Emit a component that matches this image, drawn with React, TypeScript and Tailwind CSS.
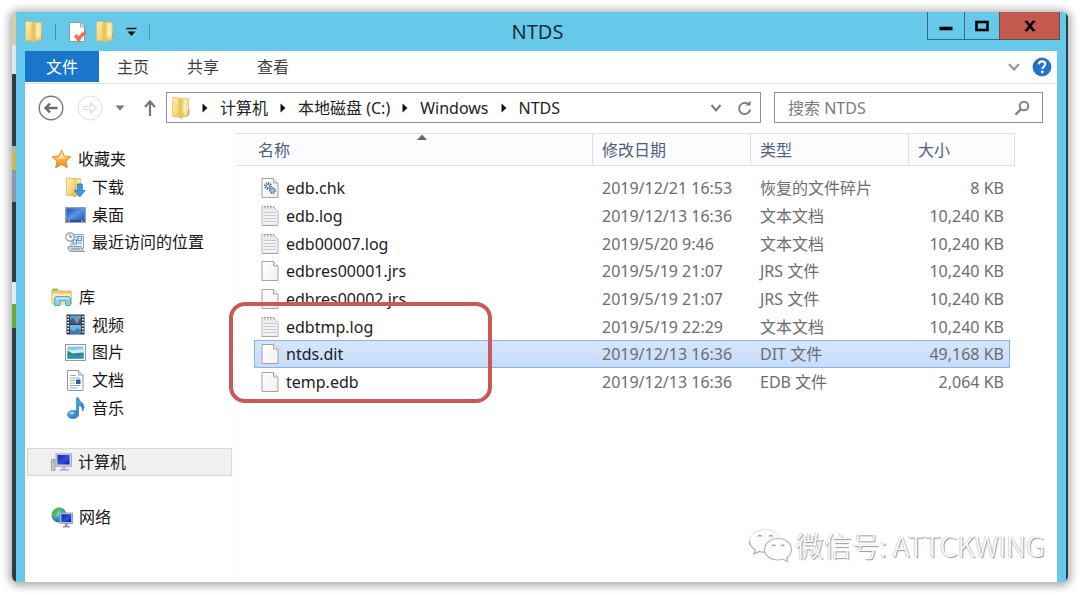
import type { ReactNode } from "react";

type IconProps = { className?: string };

function Gradients() {
  return (
    <svg width="0" height="0" className="absolute" aria-hidden="true">
      <defs>
        <linearGradient id="folderFront" x1="0" y1="0" x2="1" y2="1">
          <stop offset="0" stopColor="#fff0b0" />
          <stop offset="0.6" stopColor="#f3d678" />
          <stop offset="1" stopColor="#dcae3e" />
        </linearGradient>
        <linearGradient id="folderBack" x1="0" y1="0" x2="0" y2="1">
          <stop offset="0" stopColor="#f3dc8e" />
          <stop offset="0.6" stopColor="#f8e6a2" />
          <stop offset="1" stopColor="#e3bf5c" />
        </linearGradient>
        <linearGradient id="screen" x1="0" y1="0" x2="1" y2="1">
          <stop offset="0" stopColor="#1024a0" />
          <stop offset="0.55" stopColor="#2c4fdc" />
          <stop offset="1" stopColor="#10209a" />
        </linearGradient>
        <linearGradient id="desktop" x1="0" y1="0" x2="1" y2="1">
          <stop offset="0" stopColor="#1d4fb4" />
          <stop offset="0.5" stopColor="#5b93e6" />
          <stop offset="1" stopColor="#1f56b8" />
        </linearGradient>
        <linearGradient id="star" x1="0" y1="0" x2="0" y2="1">
          <stop offset="0" stopColor="#ffd873" />
          <stop offset="1" stopColor="#f08a1d" />
        </linearGradient>
        <linearGradient id="blueNote" x1="0" y1="0" x2="1" y2="1">
          <stop offset="0" stopColor="#6fc4f5" />
          <stop offset="1" stopColor="#1568c0" />
        </linearGradient>
        <linearGradient id="paper" x1="0" y1="0" x2="1" y2="1">
          <stop offset="0" stopColor="#ffffff" />
          <stop offset="1" stopColor="#f0f0f0" />
        </linearGradient>
        <radialGradient id="globe" cx="0.35" cy="0.3" r="0.8">
          <stop offset="0" stopColor="#b5f0e8" />
          <stop offset="0.5" stopColor="#2f9ad0" />
          <stop offset="1" stopColor="#125a9a" />
        </radialGradient>
      </defs>
    </svg>
  );
}

function FolderIcon({ className = "h-[22px] w-[18px]" }: IconProps) {
  return (
    <svg viewBox="0 0 18 22" className={className} aria-hidden="true">
      <path d="M8 2.500c0-.8.400-1.300 1.200-1.300h6c.8 0 1.300.5 1.300 1.300V19L8 20.500z" fill="url(#folderBack)" stroke="#dcb856" strokeWidth="0.600" />
      <path d="M13 2.500V18" stroke="#fff3c4" strokeWidth="1.200" />
      <path d="M0.500 1.500c0-.6.400-1 1-1h5l3.500 2V21.500l-4-1.700H1.500c-.6 0-1-.4-1-1z" fill="url(#folderFront)" stroke="#dbb650" strokeWidth="0.600" />
      <path d="M6.500 1.500L10 3v18l-3.500-1.500z" fill="#e8c45c" />
      <path d="M16.200 11.500l1.300 1V17l-1.300 1z" fill="#b9a56a" />
    </svg>
  );
}

function PropertiesIcon() {
  return (
    <svg viewBox="0 0 20 22" className="h-[22px] w-5" aria-hidden="true">
      <path d="M1.500 1.500h11l4 4.500v14.500h-15z" fill="#fff" stroke="#8d9aa5" />
      <path d="M12.500 1.500V6h4" fill="#e3e9ee" stroke="#8d9aa5" strokeWidth="0.8" />
      <path d="M7.500 14l3 4.500c1.500-3 3.500-5 7.500-7.500" fill="none" stroke="#ea7350" strokeWidth="3.600" />
    </svg>
  );
}

function StarIcon() {
  return (
    <svg viewBox="0 0 21 20" className="h-5 w-[21px]" aria-hidden="true">
      <path
        d="M10.500 1l2.800 6 6.600.8-4.900 4.500 1.400 6.500-5.900-3.300-5.900 3.300L6 12.300 1.100 7.800l6.600-.8z"
        fill="url(#star)"
        stroke="#e0882a"
        strokeWidth="0.9"
      />
      <path d="M10.500 3.500l1.900 4.300 4 .5-5 1.200-6 1 2.200-2 .8-.7z" fill="#fff0b8" opacity="0.75" />
    </svg>
  );
}

function DownloadsIcon() {
  return (
    <svg viewBox="0 0 21 21" className="h-[21px] w-[21px]" aria-hidden="true">
      <path d="M7 1.500h8.500v17H7z" fill="url(#folderBack)" stroke="#d9b95c" strokeWidth="0.7" />
      <path d="M1.500 1h5l4 2v17l-4-1.500h-5z" fill="url(#folderFront)" stroke="#d9b450" strokeWidth="0.7" />
      <path d="M12.300 7h5v6.500h2.900L14.800 20l-5.400-6.500h2.900z" fill="#3e9be0" stroke="#2377bd" strokeWidth="0.8" />
    </svg>
  );
}

function DesktopIcon() {
  return (
    <svg viewBox="0 0 21 18" className="h-[18px] w-[21px]" aria-hidden="true">
      <rect x="0.500" y="1.500" width="20" height="15" fill="#7d9cc0" stroke="#8ea5c0" />
      <rect x="1.500" y="2.500" width="18" height="12" fill="url(#desktop)" />
      <path d="M1.500 15h18" stroke="#23395a" strokeWidth="1.500" />
      <path d="M3 15h2M16 15h2" stroke="#c7d9ee" />
    </svg>
  );
}

function RecentIcon() {
  return (
    <svg viewBox="0 0 21 21" className="h-[21px] w-[21px]" aria-hidden="true">
      <path d="M6 2.500h12.500v14H6z" fill="#eaf3fa" stroke="#9ba7b3" />
      <path d="M9 5h3M13 4.500h3.500v4H13zM8 8h3.500v4H8zM13 11h4" stroke="#4b93cf" fill="none" strokeWidth="1.200" />
      <path d="M3 14.500h13c0 2 1 4 3.500 5h-14C3.500 19 3 17 3 14.500z" fill="#cfd5da" stroke="#8f979f" />
      <path d="M6 17h9" stroke="#7d858c" />
      <circle cx="5" cy="5" r="4.200" fill="#f6f7f8" stroke="#9a9fa5" strokeWidth="1.200" />
      <path d="M5 2.500V5h2.200" fill="none" stroke="#666" />
    </svg>
  );
}

function LibraryIcon() {
  return (
    <svg viewBox="0 0 22 20" className="h-5 w-[22px]" aria-hidden="true">
      <path d="M1 2.500h6l1.500 1.500H20v12.500H1z" fill="#e9cc72" stroke="#cbb05c" strokeWidth="0.8" />
      <path d="M2 2.500h4.500" stroke="#69b65b" strokeWidth="1.600" />
      <path d="M1 6h19.500v11H1z" fill="#faeba9" stroke="#d8c06a" strokeWidth="0.8" />
      <path d="M3.500 18.500V12c0-1.500 1-2.500 2.500-2.500h11c1.500 0 2.500 1 2.500 2.500v6.500h-4.800V14H9v4.500z" fill="#8ad0ea" stroke="#4b9fc8" strokeWidth="0.9" />
      <path d="M5.500 12.500c0-.8.500-1.300 1.300-1.300h9.500c.8 0 1.200.5 1.200 1.300" fill="none" stroke="#d5f2fb" strokeWidth="1.300" />
    </svg>
  );
}

function VideoIcon() {
  return (
    <svg viewBox="0 0 19 21" className="h-[21px] w-[21px]" aria-hidden="true">
      <rect x="0.500" y="0.500" width="18" height="20" fill="#2d3942" />
      <rect x="4" y="1.500" width="11" height="8.500" fill="#5a9bd5" />
      <rect x="4" y="11" width="11" height="8.500" fill="#6fb5e8" />
      <path d="M4 10V6l3-2 4 3 4-3v6z" fill="#2e5f93" />
      <path d="M8 6l3-2 2 3-2 2.500z" fill="#b58372" />
      <path d="M4 15l4 2 3-3 4 2v3.500H4z" fill="#3e7fc0" />
      <path d="M2.200 2v18M16.800 2v18" stroke="#fff" strokeWidth="1.800" strokeDasharray="1.600 1.400" />
    </svg>
  );
}

function PictureIcon() {
  return (
    <svg viewBox="0 0 21 17" className="h-[17px] w-[21px]" aria-hidden="true">
      <rect x="0.500" y="0.500" width="20" height="16" fill="#fff" stroke="#8e9aa5" />
      <rect x="2.500" y="2.500" width="16" height="12" fill="#8ac9ec" />
      <path d="M2.500 6c3-1 4 1 7 0s5 0 9-1v5h-16z" fill="#d3edf7" />
      <path d="M2.500 6.500l5 3 11-1v6h-16z" fill="#2e8a75" />
      <path d="M2.500 11.500c5-1.500 10 1 16-.5v3.500h-16z" fill="#3591b8" />
    </svg>
  );
}

function DocumentIcon() {
  return (
    <svg viewBox="0 0 19 21" className="h-[21px] w-[21px]" aria-hidden="true">
      <path d="M1.500 0.500h11l4.500 4.500v15.500h-15.500z" fill="#fff" stroke="#8c979f" />
      <path d="M12.500.5V5H17" fill="#dfe5e9" stroke="#8c979f" strokeWidth="0.800" />
      <path d="M4 5.500h6M4 8h10M4 10.500h5M4 13h5M4 15.500h10M4 18h7" stroke="#8ea1b5" strokeWidth="0.900" />
      <rect x="10" y="9.500" width="4.500" height="4.500" fill="#2a61b4" />
    </svg>
  );
}

function MusicIcon() {
  return (
    <svg viewBox="0 0 19 22" className="h-[22px] w-[21px]" aria-hidden="true">
      <path
        d="M10.500 0.800h2c.3 3.600 5.500 5 5.500 9.200 0 1.600-.6 3-1.700 4 .4-3.400-.8-5-3.800-6v9.500c0 2.500-2.500 4-5.500 4-3 0-5.500-1.400-5.500-3.700 0-2.500 2.500-4.300 6-4.300 1.200 0 2.200.3 3 .8z"
        fill="url(#blueNote)"
        stroke="#2c7cc4"
        strokeWidth="0.700"
      />
      <ellipse cx="6" cy="16" rx="2.500" ry="1.300" fill="#c5eaff" opacity="0.800" />
    </svg>
  );
}

function ComputerIcon() {
  return (
    <svg viewBox="0 0 21 19" className="h-[19px] w-[21px]" aria-hidden="true">
      <path d="M0.500 6.500h3.500v11h-3.500z" fill="#c8ccc6" stroke="#8b9189" strokeWidth="0.800" />
      <path d="M1.500 9h1.500" stroke="#6b6" />
      <rect x="5" y="0.800" width="15.500" height="12.500" fill="#c9d2dd" stroke="#96a3b3" strokeWidth="0.800" />
      <rect x="6.500" y="2" width="12" height="9.500" fill="url(#screen)" />
      <path d="M11 13.500h4v2.500h3v2H8.500v-2H11z" fill="#b8bfc7" />
    </svg>
  );
}

function NetworkIcon() {
  return (
    <svg viewBox="0 0 22 21" className="h-[21px] w-[22px]" aria-hidden="true">
      <circle cx="8" cy="8" r="7.500" fill="url(#globe)" />
      <path d="M3 3c3-3 7-2.500 8-1.500C10 4 7 3.500 6.500 6S3 8 4 11c-4-2-3.500-6-1-8zM12 4l3 2-3 1.500z" fill="#55b848" />
      <rect x="9" y="6" width="12.500" height="10.500" fill="#d4dbe4" stroke="#7f90ab" strokeWidth="0.800" />
      <rect x="10.300" y="7.200" width="10" height="8" fill="url(#screen)" />
      <path d="M14 16.500h2.500v2.300h2.300V20.500h-7v-1.700H14z" fill="#8f9aa8" />
    </svg>
  );
}

type FileKind = "blank" | "text" | "gear";

function FileIcon({ kind }: { kind: FileKind }) {
  return (
    <svg viewBox="0 0 18 22" className="h-[22px] w-[18px] shrink-0" aria-hidden="true">
      <path d="M1 1.500h11.500l4.500 4.500v14.500H1z" fill="url(#paper)" stroke="#a3a3a3" />
      <path d="M12.500 1.500V6H17" fill="#ececec" stroke="#a9a9a9" />
      {kind === "text" && (
        <>
          <path d="M1.500 5V2.500h11L16.500 6v14h-15z" fill="#ececec" />
          <path d="M2 1.500h12" stroke="#fff" strokeWidth="2" strokeDasharray="1.500 1.500" />
          <path d="M3 1l1 2.500M6 1l1 2.500M9 1l1 2.500M12 1l1 2.500" stroke="#8d8d8d" strokeWidth="0.900" />
          <path d="M3 7.500h12M3 10.500h12M3 13.500h12M3 16.500h12" stroke="#c3cad1" />
          <path d="M3 9h12M3 12h12M3 15h12M3 18h12" stroke="#fafafa" />
        </>
      )}
      {kind === "gear" && (
        <g fill="none" stroke="#4a6f9f">
          <circle cx="7" cy="9" r="3" strokeWidth="1.800" strokeDasharray="1.400 0.900" />
          <circle cx="7" cy="9" r="1.600" strokeWidth="0.800" />
          <circle cx="11.500" cy="13.500" r="2.600" strokeWidth="1.800" strokeDasharray="1.400 0.900" />
          <circle cx="11.500" cy="13.500" r="1.200" strokeWidth="0.800" />
        </g>
      )}
    </svg>
  );
}

function Crumb({ children }: { children: ReactNode }) {
  return (
    <li className="flex items-center gap-3">
      <svg viewBox="0 0 6 10" className="h-[10px] w-[6px]" aria-hidden="true">
        <path d="M0.500 0.500L5.500 5l-5 4.500z" fill="#111" />
      </svg>
      <button type="button">{children}</button>
    </li>
  );
}

function TitleBar() {
  return (
    <header className="grid h-[39px] grid-cols-[1fr_auto_1fr] items-start pl-[9px] pr-[6px]">
      <div className="flex h-[39px] items-center">
        <FolderIcon />
        <span className="ml-3 h-4 w-px bg-[#5592a8]" />
        <button type="button" aria-label="属性" className="ml-3">
          <PropertiesIcon />
        </button>
        <button type="button" aria-label="新建文件夹" className="ml-2">
          <FolderIcon />
        </button>
        <button type="button" aria-label="自定义快速访问工具栏" className="ml-3">
          <svg viewBox="0 0 11 10" className="h-[10px] w-[11px]" aria-hidden="true">
            <path d="M0.500 1.500h10" stroke="#111" strokeWidth="1.500" />
            <path d="M1.500 4.500h8l-4 4.500z" fill="#111" />
          </svg>
        </button>
        <span className="ml-3 h-4 w-px bg-[#5592a8]" />
      </div>
      <h1 className="mr-2.5 self-center text-[20px] leading-6 text-[#1d2b33]">NTDS</h1>
      <div className="flex h-7 justify-end text-black">
        <button type="button" aria-label="最小化" className="flex w-[38px] items-center justify-center border border-t-0 border-[#2f6b80]">
          <svg viewBox="0 0 14 12" className="h-3 w-[14px]" aria-hidden="true">
            <path d="M0.500 8.500h13" stroke="currentColor" strokeWidth="3.500" />
          </svg>
        </button>
        <button type="button" aria-label="最大化" className="flex w-[34px] items-center justify-center border-b border-[#2f6b80]">
          <svg viewBox="0 0 14 12" className="h-3 w-[14px]" aria-hidden="true">
            <rect x="1.500" y="2" width="11" height="8" fill="none" stroke="currentColor" strokeWidth="2.600" />
          </svg>
        </button>
        <button type="button" aria-label="关闭" className="flex w-[61px] items-center justify-center border border-t-0 border-[#6b4a4d] bg-[#c3594f]">
          <svg viewBox="0 0 14 12" className="h-3 w-[14px]" aria-hidden="true">
            <path d="M3 1l8 10M11 1L3 11" stroke="currentColor" strokeWidth="2.600" />
            <path d="M1.500 1.500H5M9 1.500h3.500M1.500 10.500H5M9 10.500h3.500" stroke="currentColor" strokeWidth="1.200" />
          </svg>
        </button>
      </div>
    </header>
  );
}

function Ribbon() {
  return (
    <div className="flex h-[33px] items-center border-b border-[#dcdddf] text-[#3f3f3f]">
      <button type="button" className="mr-[-1px] h-[31px] w-[74px] self-start bg-[#1a76c9] text-white">
        文件
      </button>
      <button type="button" className="w-[70px]">主页</button>
      <button type="button" className="w-[70px]">共享</button>
      <button type="button" className="w-[70px]">查看</button>
      <button type="button" aria-label="展开功能区" className="ml-auto">
        <svg viewBox="0 0 12 10" className="h-[10px] w-3" aria-hidden="true">
          <path d="M1 2l5 5.500L11 2" fill="none" stroke="#9a9a9a" strokeWidth="2.200" />
        </svg>
      </button>
      <button type="button" aria-label="帮助" className="ml-3 mr-[5px]">
        <svg viewBox="0 0 20 20" className="h-5 w-5" aria-hidden="true">
          <circle cx="10" cy="10" r="9" fill="#1f74cb" stroke="#1a5fab" strokeWidth="0.800" />
          <path d="M6.800 7.300C7 5.300 8.300 4.400 10.100 4.400c1.900 0 3.200 1 3.200 2.700 0 2.300-2.900 2.400-2.900 4.900" fill="none" stroke="#fff" strokeWidth="2.100" />
          <circle cx="10.300" cy="15" r="1.400" fill="#fff" />
        </svg>
      </button>
    </div>
  );
}

function AddressBar() {
  return (
    <div className="flex h-[47px] items-center pl-3 pr-[14px]">
      <button type="button" aria-label="后退">
        <svg viewBox="0 0 28 28" className="h-7 w-7" fill="none" aria-hidden="true">
          <circle cx="14" cy="14" r="11.800" stroke="#777" strokeWidth="1.400" />
          <path d="M20.500 14H9M13 9.500L8.500 14l4.500 4.500" stroke="#6b6b6b" strokeWidth="2.400" />
        </svg>
      </button>
      <button type="button" aria-label="前进" className="ml-[11px]">
        <svg viewBox="0 0 28 28" className="h-7 w-7" fill="none" aria-hidden="true">
          <circle cx="14" cy="14" r="11.800" stroke="#e3e3e3" strokeWidth="1.200" />
          <path d="M7.500 12.500h7V9l6 5-6 5v-3.500h-7z" stroke="#dedede" strokeWidth="1.200" />
        </svg>
      </button>
      <button type="button" aria-label="最近浏览的位置" className="ml-[11px]">
        <svg viewBox="0 0 10 6" className="h-[6px] w-[10px]" aria-hidden="true">
          <path d="M0.500 0.500h9L5 5.500z" fill="#777" />
        </svg>
      </button>
      <button type="button" aria-label="上移" className="ml-[19px]">
        <svg viewBox="0 0 12 18" className="h-[18px] w-3" fill="none" aria-hidden="true">
          <path d="M6 17V3M1 8l5-5.500L11 8" stroke="#777" strokeWidth="2.200" />
        </svg>
      </button>
      <div className="ml-[10px] flex h-[31px] min-w-0 flex-1 items-center border border-[#8f8f8f] bg-white pl-[5px]">
        <FolderIcon />
        <nav aria-label="路径" className="ml-3">
          <ol className="flex items-center gap-3 text-[#222]">
            <Crumb>计算机</Crumb>
            <Crumb>本地磁盘 (C:)</Crumb>
            <Crumb>Windows</Crumb>
            <Crumb>NTDS</Crumb>
          </ol>
        </nav>
        <button type="button" aria-label="以前的位置" className="ml-auto">
          <svg viewBox="0 0 12 10" className="h-[10px] w-3" aria-hidden="true">
            <path d="M1.500 2L6 7.500 10.500 2" fill="none" stroke="#777" strokeWidth="2" />
          </svg>
        </button>
        <button type="button" aria-label="刷新" className="ml-[15px] mr-[7px]">
          <svg viewBox="0 0 16 16" className="h-4 w-4" fill="none" aria-hidden="true">
            <path d="M13.200 9.500A5.600 5.600 0 1 1 11 4" stroke="#777" strokeWidth="1.800" />
            <path d="M8.500 5.500h5V0.500z" fill="#777" />
          </svg>
        </button>
      </div>
      <label className="ml-[13px] flex h-[31px] w-[269px] items-center border border-[#8f8f8f] bg-white pl-[13px] pr-3">
        <input type="search" aria-label="搜索 NTDS" placeholder="搜索 NTDS" className="min-w-0 flex-1 outline-none placeholder:text-[#7b7b7b]" />
        <svg viewBox="0 0 16 16" className="h-4 w-4" fill="none" aria-hidden="true">
          <circle cx="10" cy="6" r="4.300" stroke="#828282" strokeWidth="2" />
          <path d="M7 9.200L1.500 14.700" stroke="#828282" strokeWidth="2.400" />
        </svg>
      </label>
    </div>
  );
}

type Place = { name: string; icon: ReactNode; root?: boolean; gap?: boolean; current?: boolean };

const places: Place[] = [
  { name: "收藏夹", icon: <StarIcon />, root: true },
  { name: "下载", icon: <DownloadsIcon /> },
  { name: "桌面", icon: <DesktopIcon /> },
  { name: "最近访问的位置", icon: <RecentIcon /> },
  { name: "库", icon: <LibraryIcon />, root: true, gap: true },
  { name: "视频", icon: <VideoIcon /> },
  { name: "图片", icon: <PictureIcon /> },
  { name: "文档", icon: <DocumentIcon /> },
  { name: "音乐", icon: <MusicIcon /> },
  { name: "计算机", icon: <ComputerIcon />, root: true, gap: true, current: true },
  { name: "网络", icon: <NetworkIcon />, root: true, gap: true },
];

function Sidebar() {
  return (
    <nav aria-label="导航窗格" className="w-[210px] shrink-0 border-r border-[#f7f7f9] pl-[2px] pr-[2px] pt-[14px]">
      <ul>
        {places.map((p) => (
          <li key={p.name} className={`h-7 nth-[3n]:h-[27px] ${p.gap ? "mt-[27px]" : ""}`}>
            <a
              href="#"
              aria-current={p.current ? "location" : undefined}
              className={`flex h-full items-center border text-[#161616] ${p.root ? "gap-[6px] pl-[23px]" : "gap-[6px] pl-[37px]"} ${
                p.current ? "border-[#d9d9d9] bg-[#f0f0f0]" : "border-transparent"
              }`}
            >
              {p.icon}
              {p.name}
            </a>
          </li>
        ))}
      </ul>
    </nav>
  );
}

type FileRow = { name: string; date: string; type: string; size: string; kind: FileKind; selected?: boolean };

const files: FileRow[] = [
  { name: "edb.chk", date: "2019/12/21 16:53", type: "恢复的文件碎片", size: "8 KB", kind: "gear" },
  { name: "edb.log", date: "2019/12/13 16:36", type: "文本文档", size: "10,240 KB", kind: "text" },
  { name: "edb00007.log", date: "2019/5/20 9:46", type: "文本文档", size: "10,240 KB", kind: "text" },
  { name: "edbres00001.jrs", date: "2019/5/19 21:07", type: "JRS 文件", size: "10,240 KB", kind: "blank" },
  { name: "edbres00002.jrs", date: "2019/5/19 21:07", type: "JRS 文件", size: "10,240 KB", kind: "blank" },
  { name: "edbtmp.log", date: "2019/5/19 22:29", type: "文本文档", size: "10,240 KB", kind: "text" },
  { name: "ntds.dit", date: "2019/12/13 16:36", type: "DIT 文件", size: "49,168 KB", kind: "blank", selected: true },
  { name: "temp.edb", date: "2019/12/13 16:36", type: "EDB 文件", size: "2,064 KB", kind: "blank" },
];

const selectedCell = "border-y border-[#8fb3dc] bg-linear-to-b from-[#d6e6fb] to-[#c4dcfa]";

function FileTable() {
  return (
    <table className="w-full table-fixed border-separate border-spacing-0 text-left">
      <colgroup>
        <col className="w-[18px]" />
        <col />
        <col className="w-[158px]" />
        <col className="w-[158px]" />
        <col className="w-[101px]" />
        <col className="w-[5px]" />
      </colgroup>
      <thead className="text-[#4c607a]">
        <tr className="h-[33px] [&>th]:border-y [&>th]:border-r [&>th]:border-[#dfdfe8] [&>th]:bg-[#fcfcff] [&>th]:p-0 [&>th]:font-normal">
          <th colSpan={2} aria-sort="ascending">
            <span className="relative block pl-[22px]">
              名称
              <svg viewBox="0 0 10 6" className="absolute -top-1 left-1/2 ml-[3px] h-[6px] w-[10px]" aria-hidden="true">
                <path d="M0 6h10L5 0.500z" fill="#5f6670" />
              </svg>
            </span>
          </th>
          <th><span className="pl-[9px]">修改日期</span></th>
          <th><span className="pl-[9px]">类型</span></th>
          <th colSpan={2}><span className="pl-[9px]">大小</span></th>
        </tr>
      </thead>
      <tbody aria-hidden="true">
        <tr><td colSpan={6} className="h-2 p-0" /></tr>
      </tbody>
      <tbody className="text-[#6d6d6d]">
        {files.map((f) => (
          <tr key={f.name} aria-selected={f.selected} className="h-7 nth-[3n]:h-[27px] [&>td]:py-0">
            <td className="p-0" />
            <td className={`pr-0 ${f.selected ? `${selectedCell} border-l pl-[6px]` : "pl-[7px]"}`}>
              <span className="flex items-center gap-[7px] text-[#1c1c1c]">
                <FileIcon kind={f.kind} />
                {f.name}
              </span>
            </td>
            <td className={`pl-[9px] pr-0 ${f.selected ? selectedCell : ""}`}>{f.date}</td>
            <td className={`pl-[9px] pr-0 ${f.selected ? selectedCell : ""}`}>{f.type}</td>
            <td className={`pl-0 text-right ${f.selected ? `${selectedCell} border-r pr-[5px]` : "pr-[6px]"}`}>{f.size}</td>
            <td className="p-0" />
          </tr>
        ))}
      </tbody>
    </table>
  );
}

function Watermark() {
  return (
    <div className="absolute bottom-[18px] right-3 flex items-center gap-0.5">
      <svg viewBox="0 0 46 38" className="h-[38px] w-[46px]" fill="none" stroke="#b4b6bb" aria-hidden="true">
        <path d="M17 26c-2 .3-4 0-5.500-.6L6 28l1.300-4.200C3.500 21.500 1.500 18.500 1.500 15" stroke="#a2a4aa" strokeWidth="1.100" />
        <path d="M1.500 15C1.500 8.500 8.500 3.500 17 3.500c7 0 13 3.800 14.300 9" stroke="#dcdde0" strokeWidth="0.900" />
        <path d="M30 12.500c-7.500 0-13.500 4.800-13.500 11S22.500 34 30 34c1.800 0 3.500-.2 5-.7l4.500 2.200-1-3.600c3-2 5-5 5-8.400 0-6.200-6-11-13.500-11z" fill="#fff" strokeWidth="1.200" />
        <path d="M10 10.500q1.800-2 3.600 0M21 10.500q1.800-2 3.600 0M24 20q1.700-2 3.400 0M33 20q1.700-2 3.400 0" stroke="#8c8e95" strokeWidth="1.200" />
      </svg>
      <span className="font-['Noto_Sans_CJK_SC',sans-serif] text-[28px] font-light leading-9 text-white [text-shadow:1px_1px_1px_#8d9097,-1px_0_1px_#d0d2d6]">
        微信号: ATTCKWING
      </span>
    </div>
  );
}

export default function App() {
  return (
    <div className="flex min-h-screen bg-white p-3 font-['Noto_Sans','Noto_Sans_CJK_SC',sans-serif] text-[16px] leading-6">
      <Gradients />
      <div className="flex flex-1 overflow-hidden rounded-[6px] bg-[#66c9e9] shadow-[0_1px_9px_3px_rgba(0,0,0,0.32)]">
        <div className="w-1 shrink-0 bg-[linear-gradient(#d6cda6_0_33px,#dfe6ee_33px_62px,#303a44_62px_134px,#aeb5b0_134px_140px,#c5bb55_140px_158px,#8b97a8_158px_190px,#303a44_190px_270px,#e6eaf0_270px_292px,#69a83a_292px_316px,#303a44_316px)]" />
        <div className="flex min-w-0 flex-1 flex-col border-r-2 border-[#24414e]">
          <TitleBar />
          <div className="ml-[9px] mr-[9px] flex flex-1 flex-col bg-white">
            <Ribbon />
            <AddressBar />
            <div className="flex flex-1">
              <Sidebar />
              <main className="relative min-w-0 flex-1 pl-px pr-[42px] pt-[2px]">
                <FileTable />
                <div className="pointer-events-none absolute -left-[6px] top-[171px] h-[101px] w-[263px] rounded-[16px] border-4 border-[#c9585a]" />
                <Watermark />
              </main>
            </div>
          </div>
        </div>
      </div>
    </div>
  );
}
